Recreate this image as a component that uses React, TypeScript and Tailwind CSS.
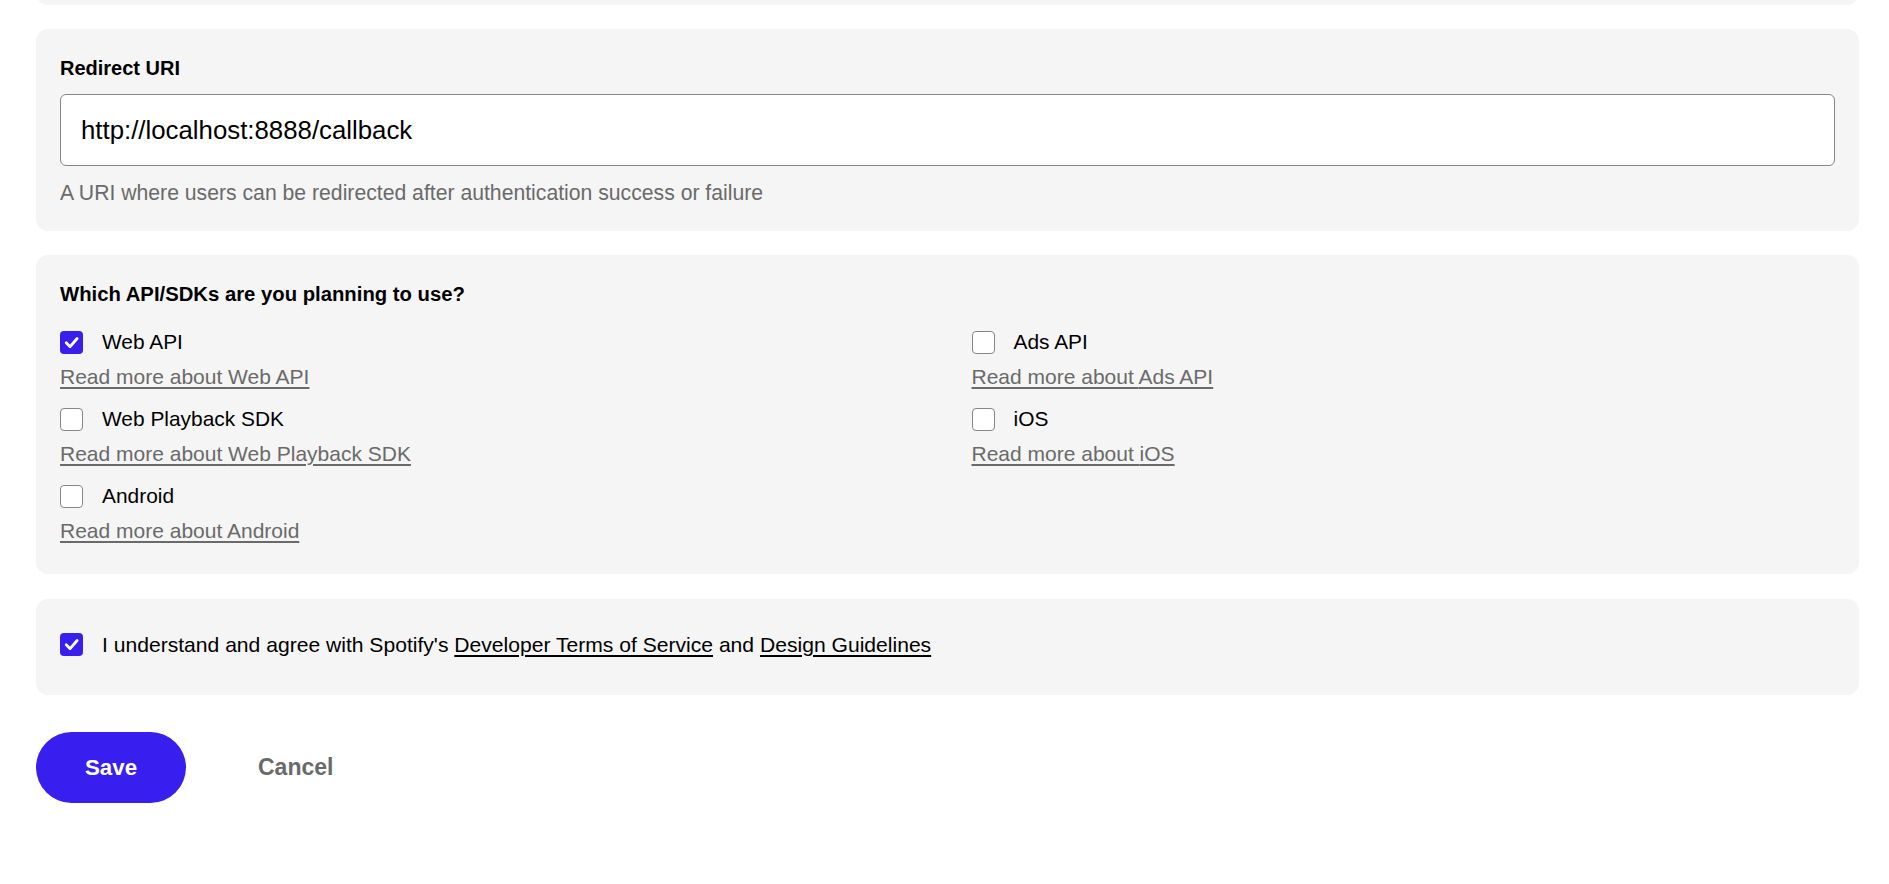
import React from "react";

const sdkColumns = [
  [
    { label: "Web API", checked: true },
    { label: "Web Playback SDK", checked: false },
    { label: "Android", checked: false },
  ],
  [
    { label: "Ads API", checked: false },
    { label: "iOS", checked: false },
  ],
];

const CheckBox = ({ checked }: { checked: boolean }) =>
  checked ? (
    <span className="flex h-[23px] w-[23px] shrink-0 items-center justify-center rounded-[4px] bg-[#381ff0]">
      <svg viewBox="0 0 23 23" className="h-[23px] w-[23px]">
        <path
          d="M6.2 11.8l3.9 3.9 7-8.2"
          fill="none"
          stroke="white"
          strokeWidth="2.8"
          strokeLinecap="round"
          strokeLinejoin="round"
        />
      </svg>
    </span>
  ) : (
    <span className="h-[23px] w-[23px] shrink-0 rounded-[4px] border border-[#878787] bg-white" />
  );

export default function App() {
  return (
    <div className="min-h-screen overflow-hidden bg-white pl-[36px] pr-[30px] font-['Liberation_Sans',Arial,sans-serif] text-black">
      {/* tail of the card above */}
      <div className="-mt-[95px] h-[100px] rounded-[12px] bg-[#f5f5f5]" />

      <section className="mt-6 rounded-[12px] bg-[#f5f5f5] px-6 pt-6 pb-6">
        <label className="block text-[20px] font-bold leading-[30px]">Redirect URI</label>
        <input
          readOnly
          defaultValue="http://localhost:8888/callback"
          className="mt-[11px] block h-[72px] w-full rounded-[6px] border border-[#878787] bg-white px-[20px] text-[25.8px] text-black outline-none"
        />
        <p className="mt-[13px] text-[21.2px] leading-[28px] text-[#6a6a6a]">
          A URI where users can be redirected after authentication success or failure
        </p>
      </section>

      <section className="mt-6 rounded-[12px] bg-[#f5f5f5] px-6 pt-6 pb-[29px]">
        <h3 className="text-[20.3px] font-bold leading-[30px]">Which API/SDKs are you planning to use?</h3>
        <div className="mt-[18px] grid grid-cols-2 gap-x-12">
          {sdkColumns.map((col, ci) => (
            <div key={ci} className="flex flex-col gap-[13px]">
              {col.map((item) => (
                <div key={item.label} className="flex flex-col">
                  <div className="flex h-[30px] items-center gap-[19px]">
                    <CheckBox checked={item.checked} />
                    <span className="text-[20.9px]">{item.label}</span>
                  </div>
                  <a
                    href="#"
                    className="mt-[6px] self-start text-[21px] leading-[28px] text-[#6a6a6a] underline decoration-[1.5px] underline-offset-[3px]"
                  >
                    Read more about {item.label}
                  </a>
                </div>
              ))}
            </div>
          ))}
        </div>
      </section>

      <section className="mt-[25px] rounded-[12px] bg-[#f5f5f5] px-6 pt-[22px] pb-[27px]">
        <div className="flex h-[47px] items-center gap-[19px]">
          <CheckBox checked />
          <span className="text-[21.1px]">
            I understand and agree with Spotify's{" "}
            <a href="#" className="underline decoration-[1.5px] underline-offset-[3px]">
              Developer Terms of Service
            </a>{" "}
            and{" "}
            <a href="#" className="underline decoration-[1.5px] underline-offset-[3px]">
              Design Guidelines
            </a>
          </span>
        </div>
      </section>

      <div className="mt-[37px] flex items-center gap-[36px]">
        <button className="h-[71px] w-[150px] rounded-full bg-[#381ff0] text-[22.3px] font-bold text-white">
          Save
        </button>
        <button className="h-[71px] px-[36px] text-[23px] font-bold text-[#6a6a6a]">Cancel</button>
      </div>
    </div>
  );
}
